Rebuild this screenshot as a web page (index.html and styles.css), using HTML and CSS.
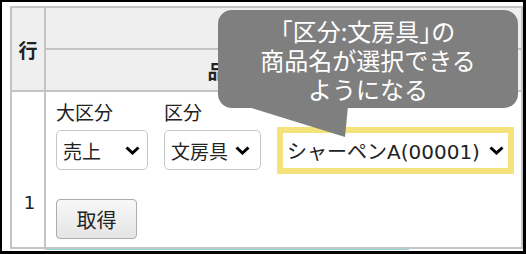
FILE: index.html
```html
<!DOCTYPE html>
<html lang="ja">
<head>
<meta charset="utf-8">
<title>商品選択</title>
<link rel="stylesheet" href="styles.css">
</head>
<body>
<div class="frame">
  <table class="grid">
    <tr>
      <th class="col-no" rowspan="2">行</th>
      <th class="head-top"></th>
    </tr>
    <tr>
      <th class="head-sub">品目区分・商品名</th>
    </tr>
    <tr>
      <td class="row-no">1</td>
      <td class="row-body">
        <div class="fields">
          <div class="field">
            <div class="label">大区分</div>
            <div class="select select-a"><span>売上</span><svg class="chev" viewBox="0 0 15 9" width="15" height="9"><path d="M1.5 1.5 L7.5 7 L13.5 1.5" fill="none" stroke="#000" stroke-width="3"/></svg></div>
          </div>
          <div class="field">
            <div class="label">区分</div>
            <div class="select select-b"><span>文房具</span><svg class="chev" viewBox="0 0 15 9" width="15" height="9"><path d="M1.5 1.5 L7.5 7 L13.5 1.5" fill="none" stroke="#000" stroke-width="3"/></svg></div>
          </div>
          <div class="highlight">
            <div class="select select-c"><span>シャーペンA(00001)</span><svg class="chev" viewBox="0 0 15 9" width="15" height="9"><path d="M1.5 1.5 L7.5 7 L13.5 1.5" fill="none" stroke="#000" stroke-width="3"/></svg></div>
          </div>
        </div>
        <button class="btn" type="button">取得</button>
      </td>
    </tr>
  </table>
  <div class="next-row"></div>

  <div class="bubble">
    <div class="bubble-line first">「区分:文房具」の</div>
    <div class="bubble-line">商品名が選択できる</div>
    <div class="bubble-line">ようになる</div>
  </div>
  <svg class="tail" viewBox="0 0 112 36" width="112" height="36"><polygon points="5,2 108,2 105,33" fill="#7f7f7f"/></svg>
</div>
</body>
</html>
```

FILE: styles.css
```css
html, body {
  margin: 0;
  padding: 0;
  background: #fff;
}

.frame {
  position: relative;
  width: 526px;
  height: 254px;
  box-sizing: border-box;
  border-style: solid;
  border-color: #000;
  border-width: 2px 3px 3px 2px;
  padding: 4px 0 0 8px;
  overflow: hidden;
  background: #fff;
  font-family: "DejaVu Sans", "Noto Sans CJK JP", sans-serif;
  color: #222;
}

.grid {
  border-collapse: separate;
  border-spacing: 0;
  width: 513px;
  border-left: 2px solid #c4c4c4;
  border-top: 2px solid #c4c4c4;
  table-layout: fixed;
}

.grid th,
.grid td {
  border-right: 2px solid #c4c4c4;
  border-bottom: 2px solid #c4c4c4;
  padding: 0;
}

.grid th {
  background: #efefef;
  font-family: "Noto Sans CJK JP", sans-serif;
  font-weight: bold;
  font-size: 19px;
  color: #222;
}

.col-no {
  width: 32px;
  height: 82px;
  text-align: center;
  vertical-align: middle;
}

.head-top {
  height: 40px;
}

.head-sub {
  height: 40px;
  text-align: center;
}

.row-no {
  text-align: center;
  vertical-align: bottom;
  padding: 0 0 33px 3px !important;
  font-size: 18px;
  line-height: 22px;
}

.row-body {
  height: 156px;
  box-sizing: border-box;
  padding: 8px 10px 8px 10px !important;
  vertical-align: top;
}

.fields {
  display: flex;
  align-items: flex-end;
  gap: 16px;
}

.field {
  display: flex;
  flex-direction: column;
}

.label {
  font-family: "Noto Sans CJK JP", sans-serif;
  font-size: 19px;
  line-height: 23px;
  margin-bottom: 7px;
  color: #222;
}

.select {
  display: flex;
  align-items: center;
  justify-content: space-between;
  box-sizing: border-box;
  height: 40px;
  border: 1px solid #c6c6c6;
  border-radius: 5px;
  background: #fff;
  padding: 0 7px 0 6px;
  font-size: 19px;
  color: #222;
}

.select-a {
  width: 92px;
}

.select-b {
  width: 97px;
  padding-right: 10px;
}

.chev {
  display: block;
  flex: none;
}

.highlight {
  border: 6px solid #f4e37a;
  margin-bottom: -4px;
}

.select-c {
  width: 225px;
  height: 35px;
  border: none;
  border-radius: 0;
  padding: 0 4px 0 4px;
  font-size: 20px;
}

.btn {
  display: block;
  margin-top: 29px;
  width: 81px;
  height: 40px;
  border: 1px solid #adadad;
  border-radius: 4px;
  background: linear-gradient(#f8f8f8, #e5e5e5);
  font-family: "Noto Sans CJK JP", sans-serif;
  font-size: 20px;
  color: #222;
  padding: 0;
}

.next-row {
  margin-left: 35px;
  width: 364px;
  height: 1px;
  background: #8fd8dc;
}

.bubble {
  position: absolute;
  left: 216px;
  top: 8px;
  width: 300px;
  height: 98px;
  box-sizing: border-box;
  padding-top: 6px;
  background: #7f7f7f;
  border-radius: 14px;
  color: #fff;
  text-align: center;
  font-family: "Noto Sans CJK JP", sans-serif;
  font-size: 24px;
}

.bubble-line {
  height: 29px;
  line-height: 29px;
}

.bubble-line.first {
  font-feature-settings: "halt";
}

.tail {
  position: absolute;
  left: 238px;
  top: 102px;
  display: block;
}
```
